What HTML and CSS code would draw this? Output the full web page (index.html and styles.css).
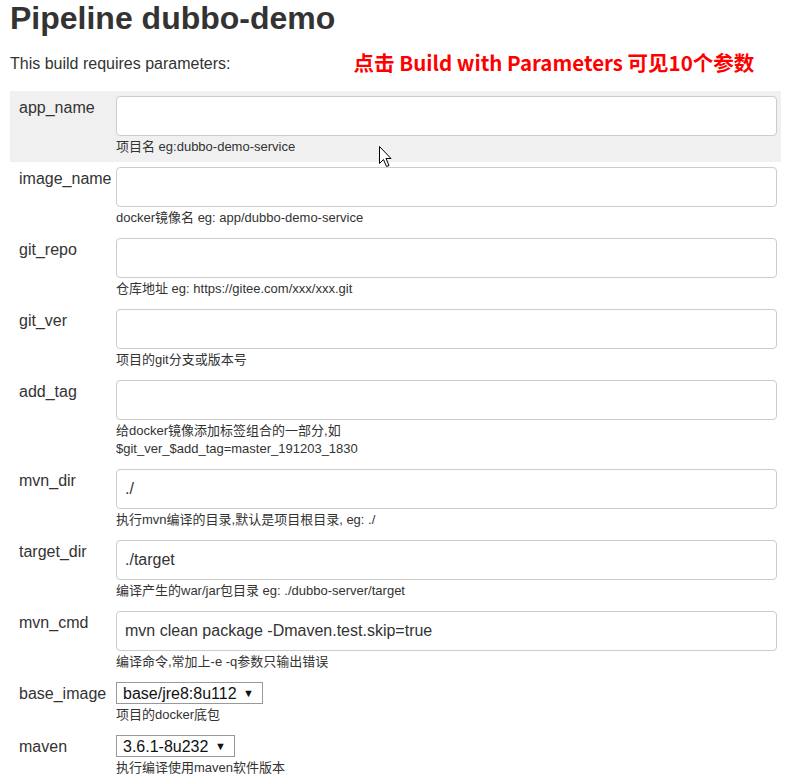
FILE: index.html
```html
<html lang="zh-CN">

<head>
    <meta charset="UTF-8">
    <meta name="viewport" content="width=device-width, initial-scale=1.0">
    <title>Pipeline dubbo-demo</title>
    <link rel="stylesheet" href="styles.css">
</head>

<body>
<div class="page">
    <h1 class="title">Pipeline dubbo-demo</h1>

    <div class="intro">
        <span class="intro-text">This build requires parameters:</span>
        <span class="note">点击 Build with Parameters 可见10个参数</span>
    </div>

    <form class="params">
        <div class="row hover">
            <label class="name" for="app_name">app_name</label>
            <div class="value">
                <input class="text" id="app_name" type="text" value="">
                <div class="desc">项目名 eg:dubbo-demo-service</div>
            </div>
        </div>

        <div class="row">
            <label class="name" for="image_name">image_name</label>
            <div class="value">
                <input class="text" id="image_name" type="text" value="">
                <div class="desc">docker镜像名 eg: app/dubbo-demo-service</div>
            </div>
        </div>

        <div class="row">
            <label class="name" for="git_repo">git_repo</label>
            <div class="value">
                <input class="text" id="git_repo" type="text" value="">
                <div class="desc">仓库地址 eg: https://gitee.com/xxx/xxx.git</div>
            </div>
        </div>

        <div class="row">
            <label class="name" for="git_ver">git_ver</label>
            <div class="value">
                <input class="text" id="git_ver" type="text" value="">
                <div class="desc">项目的git分支或版本号</div>
            </div>
        </div>

        <div class="row">
            <label class="name" for="add_tag">add_tag</label>
            <div class="value">
                <input class="text" id="add_tag" type="text" value="">
                <div class="desc">给docker镜像添加标签组合的一部分,如<br>$git_ver_$add_tag=master_191203_1830</div>
            </div>
        </div>

        <div class="row">
            <label class="name" for="mvn_dir">mvn_dir</label>
            <div class="value">
                <input class="text" id="mvn_dir" type="text" value="./">
                <div class="desc">执行mvn编译的目录,默认是项目根目录, eg: ./</div>
            </div>
        </div>

        <div class="row">
            <label class="name" for="target_dir">target_dir</label>
            <div class="value">
                <input class="text" id="target_dir" type="text" value="./target">
                <div class="desc">编译产生的war/jar包目录 eg: ./dubbo-server/target</div>
            </div>
        </div>

        <div class="row">
            <label class="name" for="mvn_cmd">mvn_cmd</label>
            <div class="value">
                <input class="text" id="mvn_cmd" type="text" value="mvn clean package -Dmaven.test.skip=true">
                <div class="desc">编译命令,常加上-e -q参数只输出错误</div>
            </div>
        </div>

        <div class="row">
            <label class="name" for="base_image">base_image</label>
            <div class="value">
                <span class="choice">
                    <select id="base_image">
                        <option>base/jre8:8u112</option>
                    </select>
                    <span class="arrow">▼</span>
                </span>
                <div class="desc">项目的docker底包</div>
            </div>
        </div>

        <div class="row">
            <label class="name" for="maven">maven</label>
            <div class="value">
                <span class="choice">
                    <select id="maven">
                        <option>3.6.1-8u232</option>
                    </select>
                    <span class="arrow">▼</span>
                </span>
                <div class="desc">执行编译使用maven软件版本</div>
            </div>
        </div>
    </form>

    <svg class="cursor" width="14" height="24" viewBox="0 0 14 24">
        <path d="M1.5 1.5 L1.5 18.5 L5.5 14.5 L8.5 21.5 L11 20.5 L8 13.5 L13 13.5 Z" fill="#fff" stroke="#000" stroke-width="1"/>
    </svg>
</div>
</body>

</html>
```

FILE: styles.css
```css
body {
    margin: 0;
    font-family: "Liberation Sans", Arial, "Noto Sans CJK SC", sans-serif;
    color: #333;
    background: #fff;
}

.page {
    position: relative;
    padding: 0 18px 0 10px;
}

.title {
    margin: 0;
    font-size: 32px;
    line-height: 36px;
    font-weight: bold;
}

.intro {
    display: flex;
    align-items: center;
    height: 28px;
    margin-top: 12px;
}
.intro-text {
    font-size: 16px;
    line-height: 20px;
    padding-top: 4px;
}
.note {
    margin-left: 123px;
    color: #f00;
    font-family: "Noto Sans CJK SC", sans-serif;
    font-weight: bold;
    font-size: 20.5px;
    line-height: 24px;
}

.params {
    margin: 15px 0 0 0;
}

.row {
    display: grid;
    grid-template-columns: 106px 1fr;
    padding: 5px 4px 6px 0;
}
.row.hover {
    background-color: #f0f0f0;
}

.name {
    padding: 2px 0 0 9px;
    font-size: 16px;
    line-height: 20px;
    white-space: nowrap;
}

.text {
    display: block;
    width: 100%;
    height: 40px;
    box-sizing: border-box;
    border: 1px solid #ccc;
    border-radius: 4px;
    padding: 0 8px;
    font-family: "Liberation Sans", Arial, sans-serif;
    font-size: 16px;
    color: #333;
    background: #fff;
}

.desc {
    margin-top: 2px;
    font-size: 13px;
    line-height: 18px;
}

.choice {
    display: inline-flex;
    align-items: center;
    height: 22px;
    box-sizing: border-box;
    border: 1px solid #999;
    padding: 0 8px 0 6px;
    background: #fff;
    vertical-align: top;
}
.choice select {
    -webkit-appearance: none;
    -moz-appearance: none;
    appearance: none;
    border: none;
    padding: 0;
    margin: 0;
    background: transparent;
    font-family: "Liberation Sans", Arial, sans-serif;
    font-size: 16px;
    color: #111;
}
.arrow {
    margin-left: 6px;
    font-size: 11px;
    color: #111;
}

.cursor {
    position: absolute;
    left: 378px;
    top: 145px;
}
```
